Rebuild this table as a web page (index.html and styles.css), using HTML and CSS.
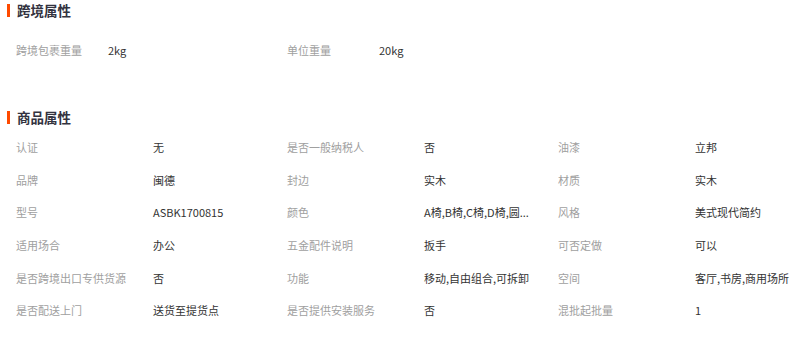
FILE: index.html
```html
<!DOCTYPE html>
<html lang="zh">
<head>
<meta charset="utf-8">
<link rel="stylesheet" href="styles.css">
</head>
<body>
<section class="block block-cross">
  <h2 class="title">跨境属性</h2>
  <div class="grid grid-cross">
    <div class="cell"><span class="label">跨境包裹重量</span><span class="value">2kg</span></div>
    <div class="cell"><span class="label">单位重量</span><span class="value">20kg</span></div>
  </div>
</section>
<section class="block block-goods">
  <h2 class="title">商品属性</h2>
  <div class="grid grid-goods">
    <div class="cell"><span class="label">认证</span><span class="value">无</span></div>
    <div class="cell"><span class="label">是否一般纳税人</span><span class="value">否</span></div>
    <div class="cell"><span class="label">油漆</span><span class="value">立邦</span></div>
    <div class="cell"><span class="label">品牌</span><span class="value">闽德</span></div>
    <div class="cell"><span class="label">封边</span><span class="value">实木</span></div>
    <div class="cell"><span class="label">材质</span><span class="value">实木</span></div>
    <div class="cell"><span class="label">型号</span><span class="value">ASBK1700815</span></div>
    <div class="cell"><span class="label">颜色</span><span class="value">A椅,B椅,C椅,D椅,圆...</span></div>
    <div class="cell"><span class="label">风格</span><span class="value">美式现代简约</span></div>
    <div class="cell"><span class="label">适用场合</span><span class="value">办公</span></div>
    <div class="cell"><span class="label">五金配件说明</span><span class="value">扳手</span></div>
    <div class="cell"><span class="label">可否定做</span><span class="value">可以</span></div>
    <div class="cell"><span class="label">是否跨境出口专供货源</span><span class="value">否</span></div>
    <div class="cell"><span class="label">功能</span><span class="value">移动,自由组合,可拆卸</span></div>
    <div class="cell"><span class="label">空间</span><span class="value">客厅,书房,商用场所</span></div>
    <div class="cell"><span class="label">是否配送上门</span><span class="value">送货至提货点</span></div>
    <div class="cell"><span class="label">是否提供安装服务</span><span class="value">否</span></div>
    <div class="cell"><span class="label">混批起批量</span><span class="value">1</span></div>
  </div>
</section>
</body>
</html>
```

FILE: styles.css
```css
html, body {
  margin: 0;
  padding: 0;
  background: #fff;
}
body {
  font-family: "Noto Sans CJK SC", "Noto Sans", sans-serif;
  font-size: 11px;
  color: #333;
  width: 800px;
  height: 338px;
  overflow: hidden;
}
.title {
  margin: 0 0 0 7px;
  padding-left: 7px;
  border-left: 3px solid #ff4a00;
  font-size: 13.5px;
  font-weight: bold;
  line-height: 13px;
  height: 13px;
  color: #333340;
}
.block-cross {
  padding-top: 4px;
}
.grid {
  display: grid;
  grid-template-columns: repeat(3, 271px);
  padding-left: 16px;
}
.grid-cross {
  margin-top: 22px;
  margin-bottom: 50px;
}
.grid-goods {
  margin-top: 7px;
}
.cell {
  display: flex;
  align-items: center;
  white-space: nowrap;
}
.grid-cross .cell {
  height: 22px;
}
.grid-goods .cell {
  height: 32.6px;
}
.label {
  color: #a0a0a0;
  flex: none;
}
.grid-cross .label {
  width: 92px;
}
.grid-goods .label {
  width: 137px;
}
.value {
  color: #333;
}
```
